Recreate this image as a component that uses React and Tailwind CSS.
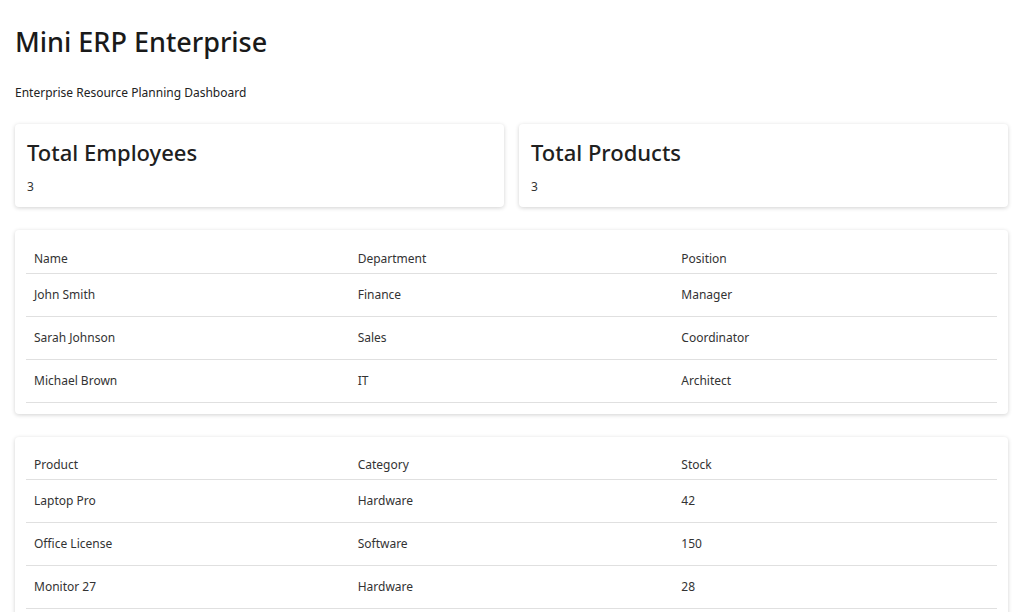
import React from 'react';

const employees = [
  ['John Smith', 'Finance', 'Manager'],
  ['Sarah Johnson', 'Sales', 'Coordinator'],
  ['Michael Brown', 'IT', 'Architect'],
];
const products = [
  ['Laptop Pro', 'Hardware', '42'],
  ['Office License', 'Software', '150'],
  ['Monitor 27', 'Hardware', '28'],
];

function StatCard({ title, value }) {
  return (
    <div className="flex-1 bg-white rounded shadow-[0_1px_4px_rgba(0,0,0,0.18)] px-3 pt-[14px] pb-3 h-[83px]">
      <h2 className="text-[22px] font-medium leading-[28px] text-[#202020]">{title}</h2>
      <p className="text-[12px] mt-[12px] text-[#333]">{value}</p>
    </div>
  );
}

function DataTable({ head, rows }) {
  return (
    <div className="bg-white rounded shadow-[0_1px_4px_rgba(0,0,0,0.18)] px-[11px] pt-[15px] pb-[11px] mb-[23px]">
      <table className="w-full text-[12px] text-[#333] table-fixed">
        <thead>
          <tr className="border-b border-[#e0e0e0]">
            {head.map((h) => (
              <th key={h} className="text-left font-normal px-2 h-[28px]">{h}</th>
            ))}
          </tr>
        </thead>
        <tbody>
          {rows.map((r) => (
            <tr key={r[0]} className="border-b border-[#e0e0e0]">
              {r.map((c, i) => (
                <td key={i} className="px-2 h-[43px]">{c}</td>
              ))}
            </tr>
          ))}
        </tbody>
      </table>
    </div>
  );
}

export default function App() {
  return (
    <div className="h-screen overflow-hidden bg-white px-[15px] pt-[22px] font-['Open_Sans',sans-serif] text-[#222]">
      <h1 className="text-[27px] font-medium leading-[40px] text-[#1a1a1a]">Mini ERP Enterprise</h1>
      <p className="text-[12px] mt-[22px]">Enterprise Resource Planning Dashboard</p>
      <div className="flex gap-[15px] mt-[22px] mb-[23px]">
        <StatCard title="Total Employees" value="3" />
        <StatCard title="Total Products" value="3" />
      </div>
      <DataTable head={['Name', 'Department', 'Position']} rows={employees} />
      <DataTable head={['Product', 'Category', 'Stock']} rows={products} />
    </div>
  );
}
